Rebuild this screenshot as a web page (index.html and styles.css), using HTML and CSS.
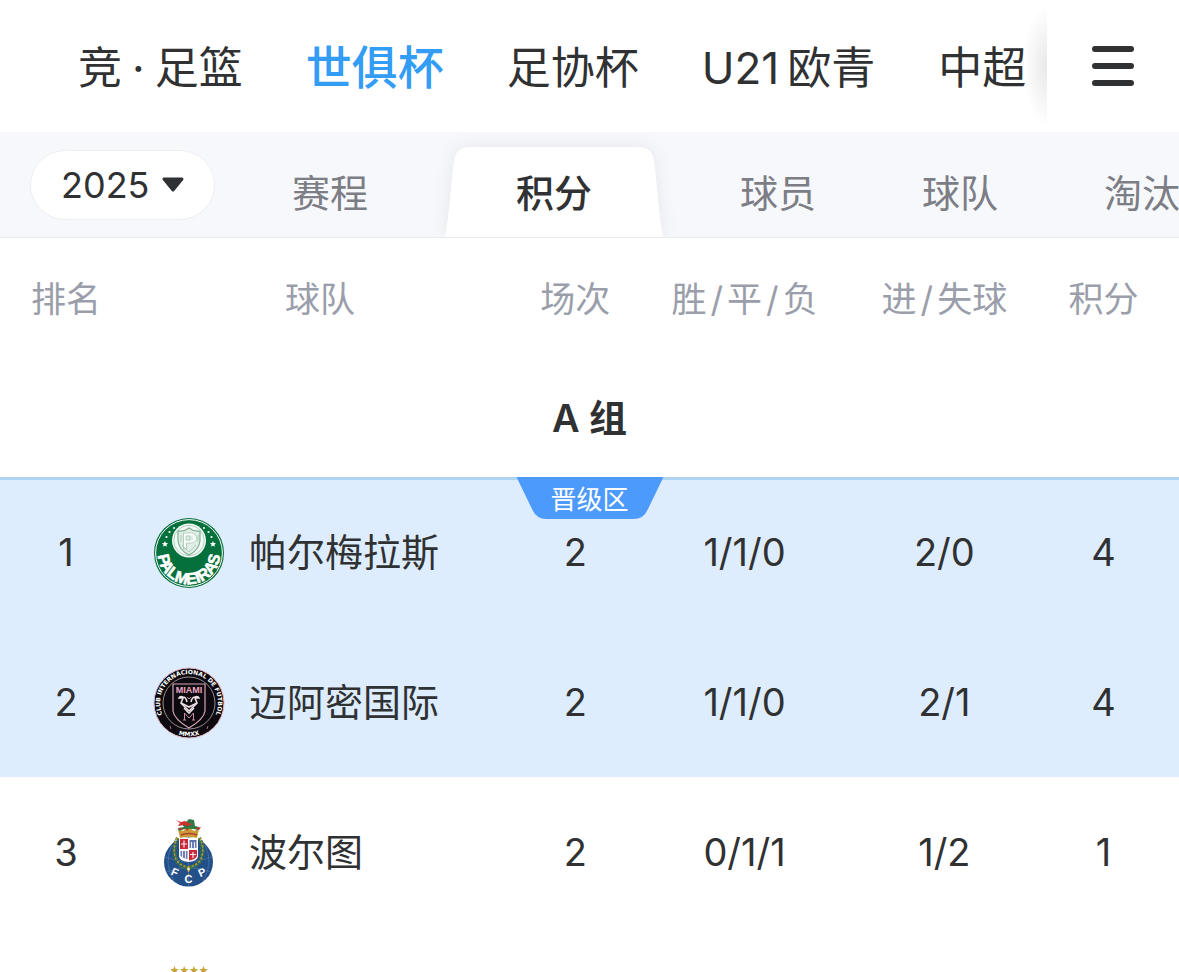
FILE: index.html
```html
<!DOCTYPE html>
<html lang="zh-CN">
<head>
    <meta charset="UTF-8">
    <meta name="viewport" content="width=device-width, initial-scale=1.0">
    <title>世俱杯 - 积分</title>
    <link rel="stylesheet" href="styles.css">
</head>
<body>
    <header class="top-bar">
        <nav class="leagues">
            <a href="#">竞<span class="dot">·</span>足篮</a>
            <a href="#" class="active">世俱杯</a>
            <a href="#">足协杯</a>
            <a href="#"><span class="age">U21</span>欧青</a>
            <a href="#">中超</a>
        </nav>
        <button type="button" class="menu-btn" aria-label="菜单">
            <svg viewBox="0 0 42 40">
                <path d="M3 3h36M3 20h36M3 37h36"/>
            </svg>
        </button>
    </header>

    <div class="sub-bar">
        <div class="season">
            <select aria-label="赛季">
                <option>2025</option>
            </select>
            <svg class="caret" viewBox="0 0 24 16">
                <path d="M3 2h18l-9 11z"/>
            </svg>
        </div>
        <nav class="tabs">
            <a href="#">赛程</a>
            <a href="#" class="active">
                <svg class="tab-shape" viewBox="0 0 218 90" preserveAspectRatio="none">
                    <path d="M0 90C5 64 6 34 9 14Q11 0 25 0H193Q207 0 209 14C212 34 213 64 218 90Z"/>
                </svg>
                <span>积分</span>
            </a>
            <a href="#">球员</a>
            <a href="#">球队</a>
            <a href="#">淘汰</a>
        </nav>
    </div>

    <main class="content">
        <table class="standings">
            <colgroup>
                <col class="col-rank">
                <col class="col-team">
                <col class="col-played">
                <col class="col-record">
                <col class="col-goals">
                <col class="col-points">
            </colgroup>
            <thead>
                <tr>
                    <th>排名</th>
                    <th>球队</th>
                    <th>场次</th>
                    <th>胜<span class="sep">/</span>平<span class="sep">/</span>负</th>
                    <th>进<span class="sep">/</span>失球</th>
                    <th>积分</th>
                </tr>
            </thead>
            <tbody>
                <tr class="group">
                    <th colspan="6">
                        A 组
                        <div class="zone">
                            <svg viewBox="0 0 147 42" preserveAspectRatio="none">
                                <path d="M0 0H147L131 33Q127 42 117 42H30Q20 42 16 33Z"/>
                            </svg>
                            <span>晋级区</span>
                        </div>
                    </th>
                </tr>
                <tr class="promoted first">
                    <td>1</td>
                    <td>
                        <div class="team">
                            <svg class="crest" viewBox="0 0 72 72">
                                <circle cx="36" cy="36" r="35" fill="#04703b"/>
                                <circle cx="36" cy="36" r="33.400" fill="none" stroke="#fff" stroke-width="1"/>
                                <circle cx="36" cy="23.500" r="17" fill="#f4faf6"/>
                                <circle cx="36" cy="23.500" r="15.200" fill="none" stroke="#9cc6ab" stroke-width=".8"/>
                                <path d="M25 14q6 1 11-3 5 4 11 3v10q-1 9-11 14-10-5-11-14z" fill="#e0eee5" stroke="#7fb093" stroke-width="1.200"/>
                                <path d="M32 32V17h6q4 0 4 4t-4 4h-6" fill="none" stroke="#fff" stroke-width="2.500"/>
                                <path d="M30.500 32V16h8q5 1 5 5t-5 5h-5v6zM28 18v7M45 18v7M29 28l7 7M43 28l-7 7M33 19h4v4h-4z" fill="none" stroke="#9fc5ae" stroke-width=".8"/>
                                <g fill="#fff">
                                    <path id="star" d="M12 24l.9 1.900 2.100.2-1.500 1.500.4 2.100-1.900-1.100-1.900 1.100.4-2.100-1.500-1.500 2.100-.2z"/>
                                    <use href="#star" x="48"/>
                                    <circle cx="13.500" cy="20" r="1.100"/>
                                    <circle cx="16.500" cy="15" r="1.100"/>
                                    <circle cx="21" cy="11" r="1"/>
                                    <circle cx="58.500" cy="20" r="1.100"/>
                                    <circle cx="55.500" cy="15" r="1.100"/>
                                    <circle cx="51" cy="11" r="1"/>
                                </g>
                                <path id="palArc" d="M5.600 29A31.200 31.200 0 1 0 66.400 29" fill="none"/>
                                <text class="pal-name"><textPath href="#palArc" startOffset="50%">PALMEIRAS</textPath></text>
                            </svg>
                            <span>帕尔梅拉斯</span>
                        </div>
                    </td>
                    <td>2</td>
                    <td>1/1/0</td>
                    <td>2/0</td>
                    <td>4</td>
                </tr>
                <tr class="promoted">
                    <td>2</td>
                    <td>
                        <div class="team">
                            <svg class="crest" viewBox="0 0 72 72">
                                <circle cx="36" cy="36" r="35" fill="#0c0a0e" stroke="#e3b3c4" stroke-width="1"/>
                                <circle cx="36" cy="36" r="26" fill="none" stroke="#b9a9b0" stroke-width=".8"/>
                                <path d="M20 17h32v27q-1 8-16 17-15-9-16-17z" fill="#0c0a0e" stroke="#d9a3b7" stroke-width="1.200"/>
                                <g fill="none" stroke="#ecdfe5" stroke-width="1.600">
                                    <path d="M34 35q-1-5-4-5-3-1-4 1h4l-2 5 8 8M38 35q1-5 4-5 3-1 4 1h-4l2 5-8 8"/>
                                    <path d="M28 36l8 4 8-4M31 41l5 5 5-5"/>
                                </g>
                                <path d="M34 30l2 2 2-2M31.500 53V46l4.500 5 4.500-5v7M30 53h3M39 53h3" fill="none" stroke="#c98ba3" stroke-width="1"/>
                                <text class="mia-name" x="36" y="26">MIAMI</text>
                                <path id="miaTop" d="M16.200 57.200A29 29 0 1 1 55.800 57.200" fill="none"/>
                                <text class="mia-ring"><textPath href="#miaTop" startOffset="50%">CLUB INTERNACIONAL DE FUTBOL</textPath></text>
                                <path id="miaBottom" d="M16 62.500A33 33 0 0 0 56 62.500" fill="none"/>
                                <text class="mia-ring"><textPath href="#miaBottom" startOffset="50%">MMXX</textPath></text>
                                <path d="M17 59l1 3M55 59l-1 3" stroke="#c98ba3" stroke-width=".8"/>
                            </svg>
                            <span>迈阿密国际</span>
                        </div>
                    </td>
                    <td>2</td>
                    <td>1/1/0</td>
                    <td>2/1</td>
                    <td>4</td>
                </tr>
                <tr>
                    <td>3</td>
                    <td>
                        <div class="team">
                            <svg class="crest" viewBox="0 0 72 72">
                                <circle cx="35.500" cy="45" r="24.500" fill="#24508a"/>
                                <path d="M35.500 21v48M19 28q-9 18 2 36M52 28q9 18-2 36M12 40q23 9 47 0M13 55q22-9 45 0" fill="none" stroke="#5f86b5" stroke-width=".5"/>
                                <!-- laurel -->
                                <path d="M25 21q-6 10-2 21 3 7 12 9 10-2 13-9 4-11-2-21" fill="none" stroke="#3d7440" stroke-width="4" stroke-dasharray="2.500 1"/>
                                <path d="M24 21q-5 11-1 21 4 7 12 8 9-1 13-8 4-10-1-21M35.500 49v10" fill="none" stroke="#c79b3a" stroke-width="1.500" stroke-dasharray="2 2"/>
                                <!-- arms -->
                                <path d="M26 21h19v18q0 5-9.500 6-9.500-1-9.500-6z" fill="#fff"/>
                                <path d="M27 22h8v10h-8zM36 33h8v6q-1 3-8 4.500z" fill="#c9283a"/>
                                <path d="M36.500 23h7v8h-7zM27.500 34h7v8q-5-1-7-3z" fill="#5973ad"/>
                                <path d="M31 23.500v7M28 27h6M40 35v6M37 37.500h6M38.500 25v6M41.500 25v6M29.500 34v6M32.500 34v7" stroke="#f5e9ec" stroke-width="1.200"/>
                                <!-- crown and dragon -->
                                <path d="M25 12l2 9q8-2 17 0l2-9-5 2-5.500-4-5.500 4z" fill="#c99a35"/>
                                <path d="M28 18q8-3 16 0" fill="none" stroke="#b33b2e" stroke-width="1.500"/>
                                <path d="M26 14q8-4 19-1l1-3-4-1-1-6-5-1-3 3-5 1 3 4-6 1z" fill="#2e7a44"/>
                                <path d="M23 3l5 2 4-1 3 2 5 1-5 2-4-1-6 1 2-3zM24 12l4-1 2 2zM31 11l4 1v2zM42 11l6-1-2 3z" fill="#cf2f2d"/>
                                <circle cx="35.500" cy="52" r="1.500" fill="#f4e6b0"/>
                                <g class="por-name">
                                    <text x="22" y="59" transform="rotate(24 22 55)">F</text>
                                    <text x="35.500" y="65.500">C</text>
                                    <text x="49" y="59" transform="rotate(-24 49 55)">P</text>
                                </g>
                            </svg>
                            <span>波尔图</span>
                        </div>
                    </td>
                    <td>2</td>
                    <td>0/1/1</td>
                    <td>1/2</td>
                    <td>1</td>
                </tr>
                <tr>
                    <td></td>
                    <td>
                        <div class="team">
                            <svg class="crest" viewBox="0 0 72 72">
                                <g fill="#c9a436">
                                    <path id="gold" d="M21.500 -1l1.200 2.900 3.100.2-2.400 2 .8 3.100-2.700-1.700-2.700 1.700.8-3.100-2.400-2 3.100-.2z"/>
                                    <use href="#gold" x="9.700"/>
                                    <use href="#gold" x="19.400"/>
                                    <use href="#gold" x="29"/>
                                </g>
                            </svg>
                        </div>
                    </td>
                    <td></td>
                    <td></td>
                    <td></td>
                    <td></td>
                </tr>
            </tbody>
        </table>
    </main>
</body>
</html>
```
FILE: styles.css
```css
* {
    margin: 0;
    padding: 0;
    box-sizing: border-box;
}

body {
    display: flex;
    flex-direction: column;
    height: 100vh;
    overflow: hidden;
    background: #fff;
    color: #303133;
    font-family: Inter, "Noto Sans CJK SC", sans-serif;
    line-height: 1.2;
}

a {
    color: inherit;
    text-decoration: none;
}

/* league bar */
.top-bar {
    display: flex;
    flex: none;
    height: 132px;
}

.leagues {
    position: relative;
    display: flex;
    flex: 1;
    align-items: center;
    gap: 63px;
    min-width: 0;
    padding: 4px 0 0 78px;
    overflow: hidden;
    font-size: 44px;
    white-space: nowrap;
}

.leagues .active {
    color: #339cf5;
    font-size: 46px;
    font-weight: 500;
}

.leagues .dot {
    margin: 0 10px;
}

.leagues .age {
    margin-right: 8px;
}

/* shade where the list slides under the menu button */
.leagues::after {
    content: "";
    position: absolute;
    top: 0;
    right: 0;
    width: 24px;
    height: 100%;
    background: radial-gradient(ellipse 100% 46% at 100% 50%, rgba(0,0,0,0.09), rgba(0,0,0,0));
}

.menu-btn {
    display: flex;
    flex: none;
    align-items: center;
    justify-content: center;
    width: 132px;
    border: none;
    background: #fff;
    cursor: pointer;
}

.menu-btn svg {
    width: 42px;
    height: 40px;
    stroke: #303133;
    stroke-width: 6;
    stroke-linecap: round;
}

/* season + tabs */
.sub-bar {
    display: flex;
    flex: none;
    gap: 24px;
    height: 106px;
    padding-left: 30px;
    background: #f7f8fb;
    border-bottom: 1px solid #eaebee;
    overflow: hidden;
}

.season {
    position: relative;
    flex: none;
    margin-top: 18px;
}

.season select {
    width: 185px;
    height: 70px;
    padding-left: 30px;
    appearance: none;
    background: #fff;
    border: 1px solid #eeeff1;
    border-radius: 35px;
    color: #303133;
    font-family: inherit;
    font-size: 36px;
    cursor: pointer;
}

.season .caret {
    position: absolute;
    top: 27px;
    right: 30px;
    width: 24px;
    height: 16px;
    fill: #303133;
    stroke: #303133;
    stroke-width: 3;
    stroke-linejoin: round;
    pointer-events: none;
}

.tabs {
    display: flex;
    align-items: flex-end;
    color: #7c7d85;
    font-size: 38px;
    white-space: nowrap;
}

.tabs a {
    position: relative;
    display: flex;
    flex: none;
    align-items: center;
    height: 90px;
    padding: 4px 53px 0;
}

.tabs .active {
    margin: 0 24px;
    padding: 4px 71px 0;
    color: #303133;
    font-weight: 500;
}

.tabs .active span {
    position: relative;
}

.tab-shape {
    position: absolute;
    inset: 0;
    width: 100%;
    height: 100%;
    overflow: visible;
    fill: #fff;
    filter: drop-shadow(0 0 9px rgba(0,0,0,0.07));
}

/* standings */
.content {
    flex: 1;
    min-height: 0;
    overflow-y: auto;
    scrollbar-width: none;
}

.standings {
    width: 100%;
    table-layout: fixed;
    border-collapse: collapse;
    text-align: center;
    font-size: 38px;
}

.col-rank { width: 11.2%; }
.col-team { width: 31.9%; }
.col-played { width: 11.4%; }
.col-record { width: 17.3%; }
.col-goals { width: 16.6%; }
.col-points { width: 11.6%; }

.standings th,
.standings td {
    padding-top: 2px;
}

.standings tr > :last-child:not(:first-child) {
    padding-right: 14px;
}

.standings thead th {
    height: 119px;
    color: #9a9eab;
    font-size: 35px;
    font-weight: 400;
    white-space: nowrap;
}

.sep {
    margin: 0 4px;
}

.standings .group th {
    position: relative;
    height: 120px;
    padding-top: 4px;
    font-weight: 600;
}

.zone {
    position: absolute;
    top: 100%;
    left: 50%;
    display: flex;
    align-items: center;
    justify-content: center;
    width: 147px;
    height: 42px;
    padding-top: 4px;
    transform: translateX(-50%);
    color: #fff;
    font-size: 26px;
    font-weight: 400;
}

.zone svg {
    position: absolute;
    inset: 0;
    width: 100%;
    height: 100%;
    fill: #4d9afd;
}

.zone span {
    position: relative;
}

.standings td {
    height: 150px;
}

.promoted td {
    background: #deedfd;
}

.first td {
    box-shadow: inset 0 3px #b0d5f3;
}

.team {
    display: flex;
    align-items: center;
    gap: 24px;
    padding-left: 21px;
    white-space: nowrap;
}

.crest {
    flex: none;
    width: 72px;
    height: 72px;
    overflow: visible;
}

.crest text {
    fill: #fff;
    font-family: "Liberation Sans", sans-serif;
    font-weight: 700;
    text-anchor: middle;
}

.crest .pal-name {
    font-size: 16px;
    stroke: #fff;
    stroke-width: 0.6;
}

.crest .mia-name {
    fill: #eba9c2;
    font-size: 9px;
}

.crest .mia-ring {
    font-family: "DejaVu Sans", sans-serif;
    font-size: 6px;
}

.crest .por-name text {
    font-size: 11px;
}
```
